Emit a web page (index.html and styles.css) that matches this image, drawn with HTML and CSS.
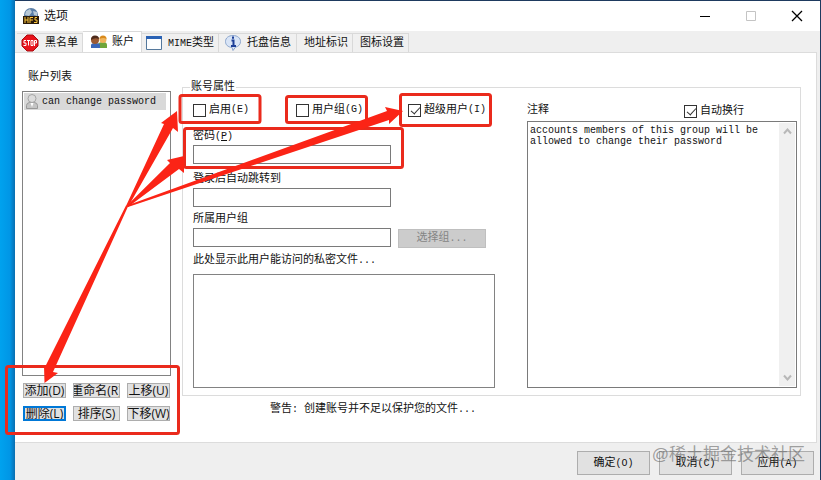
FILE: index.html
```html
<!DOCTYPE html>
<html lang="zh-CN">
<head>
  <meta charset="UTF-8">
  <meta name="viewport" content="width=device-width, initial-scale=1.0">
  <title>选项</title>
  <link rel="stylesheet" href="styles.css">
</head>
<body>
  <div class="window">
    <header class="titlebar">
      <svg class="app-icon" width="18" height="16" viewBox="0 0 18 16">
        <circle cx="9" cy="7" r="7" fill="#5b7fa8"/>
        <path d="M4 3l4-2 2 3-3 4-4-1zM11 3l4 1v4l-3-1z" fill="#b9c9d6"/>
        <rect x="1" y="8" width="16" height="8" fill="#2a1a08"/>
        <path d="M3 9v6M6 9v6M3 12h3M8 15V9.500h3M8 12h3M15 9.500h-2v2.500h2v2.500h-3" fill="none" stroke="#ffc83c"/>
      </svg>
      <h1>选项</h1>
      <div class="window-controls">
        <button type="button" aria-label="最小化"><svg width="12" height="12" viewBox="0 0 12 12"><path d="M1 6.500h10" stroke="#000"/></svg></button>
        <button type="button" aria-label="最大化" disabled><svg width="12" height="12" viewBox="0 0 12 12"><path d="M1.500 1.500h9v9h-9z" fill="none" stroke="#c4c4c4"/></svg></button>
        <button type="button" aria-label="关闭"><svg width="12" height="12" viewBox="0 0 12 12"><path d="M1 1l10 10M11 1L1 11" stroke="#000" stroke-width="1.300"/></svg></button>
      </div>
    </header>

    <nav class="tabs">
      <button type="button" class="tab">
        <svg width="18" height="18" viewBox="0 0 18 18">
          <path d="M6 1h6l5 5v6l-5 5H6l-5-5V6z" fill="#e8141c" stroke="#a80c10"/>
          <path d="M5 6.500H3v2.500h2v2.500H2.500M6 6.500h3M7.500 6.500v5M10 6.500h2v5h-2zM13.500 12V6.500h2V9h-2" fill="none" stroke="#fff"/>
        </svg>
        黑名单
      </button>
      <button type="button" class="tab active">
        <svg width="18" height="14" viewBox="0 0 18 14">
          <path d="M8 13V9q1-2 5-2 4 0 4 3v3z" fill="#6fa53a"/>
          <circle cx="13" cy="4.500" r="3.500" fill="#f0b45c"/>
          <path d="M9.500 4q0-3.500 3.500-3.500T16.500 4q-3-2-7 0z" fill="#d98a1c"/>
          <path d="M1 13v-3q0-2 4.500-2t4.500 2v3z" fill="#3a66b8"/>
          <circle cx="5" cy="5" r="4" fill="#9a5a34"/>
          <path d="M1 5q0-4.500 4-4.500T9 4Q5 2 1 5z" fill="#4e2c1c"/>
        </svg>
        账户
      </button>
      <button type="button" class="tab">
        <svg width="16" height="14" viewBox="0 0 16 14">
          <path d="M.5.5h15v13H.5z" fill="#fdfeff" stroke="#54789c"/>
          <path d="M0 0h16v3H0z" fill="#2a62b4"/>
        </svg>
        <span><span class="latin">MIME</span>类型</span>
      </button>
      <button type="button" class="tab tray">
        <svg width="16" height="16" viewBox="0 0 16 16">
          <path d="M8 .5c4.500 0 7.500 2.500 7.500 6 0 3-2 5-5 5.700L8 15.500l-1-3C3 12 .5 10 .5 6.500.5 3 3.500.5 8 .5z" fill="#d8e4f6" stroke="#8aa4cc"/>
          <path d="M8 1.500v2.200M6.500 5.500H8.500v5.500M6 11h5" fill="none" stroke="#1c3f98" stroke-width="2"/>
        </svg>
        托盘信息
      </button>
      <button type="button" class="tab">地址标识</button>
      <button type="button" class="tab">图标设置</button>
    </nav>

    <main class="pane">
      <section class="accounts">
        <h2>账户列表</h2>
        <ul class="account-list">
          <li class="selected">
            <svg width="12" height="15" viewBox="0 0 12 15">
              <path d="M.5 14.500v-3q0-2.500 3-3h5q3 .5 3 3v3z" fill="#c4c4c4" stroke="#999"/>
              <circle cx="6" cy="4.500" r="4" fill="#dcdcdc" stroke="#a4a4a4"/>
              <path d="M4.500 9L6 13l1.500-4z" fill="#fff"/>
            </svg>
            can change password
          </li>
        </ul>
        <div class="list-actions">
          <button type="button">添加(D)</button>
          <button type="button">重命名(R)</button>
          <button type="button">上移(U)</button>
          <button type="button" class="focused">删除(L)</button>
          <button type="button">排序(S)</button>
          <button type="button">下移(W)</button>
        </div>
      </section>

      <section class="details">
        <fieldset class="properties">
          <legend>账号属性</legend>
          <div class="account-form">
            <div class="flags">
              <label><input type="checkbox">启用<span class="latin">(E)</span></label>
              <label><input type="checkbox">用户组<span class="latin">(G)</span></label>
              <label><input type="checkbox" checked>超级用户<span class="latin">(I)</span></label>
            </div>
            <label class="caption" for="password">密码<span class="latin">(<u>P</u>)</span></label>
            <input class="field" type="password" id="password">
            <label class="caption" for="redirect">登录后自动跳转到</label>
            <input class="field redirect" type="text" id="redirect">
            <label class="caption" for="groups">所属用户组</label>
            <div class="group-row">
              <input class="field" type="text" id="groups">
              <button type="button" disabled>选择组<span class="latin">...</span></button>
            </div>
            <label class="caption" for="files">此处显示此用户能访问的私密文件<span class="latin">...</span></label>
            <textarea class="files" id="files" readonly></textarea>
          </div>

          <div class="notes">
            <div class="notes-head">
              <label for="notes">注释</label>
              <label class="wrap-toggle"><input type="checkbox" checked>自动换行</label>
            </div>
            <div class="notes-box">
              <textarea id="notes">accounts members of this group will be allowed to change their password</textarea>
              <div class="scrollbar">
                <svg width="9" height="7" viewBox="0 0 9 7"><path d="M1 5.500l3.500-4L8 5.500" fill="none" stroke="#b8b8b8" stroke-width="2"/></svg>
                <svg width="9" height="7" viewBox="0 0 9 7"><path d="M1 1.500l3.500 4L8 1.500" fill="none" stroke="#b8b8b8" stroke-width="2"/></svg>
              </div>
            </div>
          </div>
        </fieldset>
        <p class="warning">警告<span class="latin">: </span>创建账号并不足以保护您的文件<span class="latin">...</span></p>
      </section>
    </main>

    <footer class="dialog-actions">
      <button type="button">确定<span class="latin">(O)</span></button>
      <button type="button">取消<span class="latin">(C)</span></button>
      <button type="button">应用<span class="latin">(A)</span></button>
      <span class="watermark">@稀土掘金技术社区</span>
    </footer>
  </div>

  <!-- red callouts drawn over the dialog -->
  <svg class="callouts" width="821" height="480" viewBox="0 0 821 480">
    <g fill="none" stroke="#ea2a1c" stroke-width="3">
      <rect x="180" y="95.500" width="80" height="27" rx="2"/>
      <rect x="286.500" y="96.500" width="80" height="26" rx="2"/>
      <rect x="400.500" y="94.500" width="90" height="31" rx="2"/>
      <rect x="184.500" y="128.500" width="218" height="39" rx="2"/>
      <rect x="6.500" y="366.500" width="172" height="67" rx="2"/>
    </g>
    <g fill="#fb2416">
      <path d="M126 205.500L46 365l-2 1 .5 17L58 373l-5-1L128 206.500z"/>
      <path d="M126 206L164 124l-3-1L177 111l1 21-5-4L128 207z"/>
      <path d="M127 205.500L170 163l-3-3 17-4 0 17-5-4L128 207z"/>
      <path d="M127 205.500L387 111l-2-4 18 4-14 13v-4L128 207z"/>
    </g>
  </svg>
</body>
</html>
```
FILE: styles.css
```css
* {
  box-sizing: border-box;
}

body {
  margin: 0;
  padding: 1px 1px 0 15px;
  min-height: 100vh;
  display: flex;
  background: linear-gradient(to right, #00a2ee 0, #0096e6 10px, #0a6eb0 15px, #1e3a5f 15px);
  font-family: "Liberation Mono", "Noto Sans CJK SC", monospace;
  font-size: 11px;
  line-height: 14px;
  color: #111;
}

button,
input,
textarea {
  font: inherit;
  color: inherit;
  margin: 0;
  border-radius: 0;
}

h1,
h2,
p,
ul {
  margin: 0;
  padding: 0;
  font-size: 11px;
  font-weight: normal;
}

.latin {
  font-size: 10px;
}

.window {
  flex: 1;
  display: flex;
  flex-direction: column;
  background: #efefef;
}

/* title bar */
.titlebar {
  display: flex;
  align-items: center;
  gap: 4px;
  height: 30px;
  padding-left: 7px;
  background: #fff;
}

.titlebar h1 {
  padding-top: 2px;
  font-size: 12px;
}

.window-controls {
  display: flex;
  margin-left: auto;
}

.window-controls button {
  width: 46px;
  height: 28px;
  padding: 0;
  border: none;
  background: none;
}

.window-controls svg {
  display: block;
  margin: auto;
}

/* tabs */
.tabs {
  display: flex;
  align-items: flex-end;
  height: 21px;
  padding-left: 2px;
}

.tab {
  display: flex;
  align-items: center;
  gap: 6px;
  height: 19px;
  padding: 0 4px;
  border: 1px solid #d9d9d9;
  border-left: none;
  border-bottom: none;
  background: #f0f0f0;
}

.tab.tray {
  padding: 0 5px 0 6px;
}

.tab:nth-child(n+5) {
  padding: 0 4px 0 7px;
}

.tab.active {
  height: 22px;
  margin-bottom: -1px;
  padding: 0 7px 2px 7px;
  gap: 4px;
  background: #fff;
}

/* pane */
.pane {
  flex: 1;
  display: flex;
  gap: 11px;
  margin-right: 3px;
  padding: 17px 15px 0 7px;
  border: 1px solid #dcdcdc;
  border-left: none;
  background: #fff;
}

.accounts {
  display: flex;
  flex-direction: column;
  width: 149px;
}

.accounts h2 {
  margin-bottom: 7px;
  padding-left: 6px;
}

.account-list {
  height: 285px;
  padding: 1px;
  border: 1px solid #828282;
  list-style: none;
}

.account-list li {
  display: flex;
  align-items: center;
  gap: 4px;
  width: 142px;
  height: 17px;
  padding-left: 2px;
  background: #d9d9d9;
  font-size: 10px;
}

.list-actions {
  display: grid;
  grid-template-columns: 43px 47px 43px;
  gap: 8px 7px;
  margin: 7px 0 0 1px;
}

.list-actions button {
  display: flex;
  justify-content: center;
  align-items: center;
  height: 15px;
  padding: 0;
  border: 1px solid #adadad;
  background: #e1e1e1;
  font-family: "Open Sans", "Noto Sans CJK SC", sans-serif;
  font-size: 12px;
  line-height: 13px;
  white-space: nowrap;
  overflow: hidden;
}

.list-actions .focused {
  border: 2px solid #0078d7;
}

/* account properties */
.details {
  flex: 1;
  padding-top: 10px;
}

.properties {
  display: flex;
  gap: 32px;
  margin: 0;
  padding: 9px 3px 7px 10px;
  border: 1px solid #dcdcdc;
}

.properties legend {
  margin-left: -3px;
  padding: 0 1px;
}

.account-form {
  display: flex;
  flex-direction: column;
  align-items: flex-start;
  width: 302px;
}

.flags {
  display: grid;
  grid-template-columns: 103px 112px auto;
  margin-bottom: 12px;
}

.flags label,
.wrap-toggle {
  display: flex;
  align-items: center;
}

input[type="checkbox"] {
  appearance: none;
  width: 13px;
  height: 13px;
  margin-right: 3px;
  border: 1px solid #333;
  background: #fff;
}

input[type="checkbox"]:checked::before {
  content: "";
  display: block;
  width: 4px;
  height: 8px;
  margin: 0 0 0 4px;
  border: solid #333;
  border-width: 0 1px 1px 0;
  transform: rotate(42deg);
}

.caption {
  height: 14px;
  margin-bottom: 2px;
}

.field {
  width: 198px;
  height: 19px;
  margin-bottom: 8px;
  padding: 0 3px;
  border: 1px solid #7a7a7a;
  background: #fff;
}

.field.redirect {
  margin-bottom: 5px;
}

.group-row {
  display: flex;
  gap: 7px;
  margin-bottom: 5px;
}

.group-row .field {
  margin: 0;
}

.group-row button {
  width: 88px;
  height: 19px;
  margin-top: 1px;
  padding: 0;
  border: 1px solid #bfbfbf;
  background: #ccc;
  color: #858585;
}

.files {
  width: 100%;
  height: 114px;
  margin-top: 5px;
  border: 1px solid #828282;
  resize: none;
}

.notes {
  flex: 1;
  display: flex;
  flex-direction: column;
}

.notes-head {
  display: flex;
  justify-content: space-between;
  margin-bottom: 3px;
  padding-right: 53px;
}

.wrap-toggle {
  padding-top: 1px;
}

.notes-box {
  flex: 1;
  display: flex;
  border: 1px solid #7a7a7a;
}

.notes-box textarea {
  flex: 1;
  min-width: 0;
  padding: 3px 2px;
  border: none;
  font-size: 10px;
  line-height: 11px;
  resize: none;
  overflow: hidden;
}

.scrollbar {
  display: flex;
  flex-direction: column;
  justify-content: space-between;
  align-items: center;
  width: 16px;
  margin: 1px;
  padding: 5px 0;
  background: #f0f0f0;
}

.warning {
  margin-top: 6px;
  padding-left: 88px;
}

/* footer */
.dialog-actions {
  position: relative;
  display: flex;
  justify-content: flex-end;
  gap: 9px;
  height: 37px;
  padding: 8px 6px 5px 0;
}

.dialog-actions button {
  width: 73px;
  height: 24px;
  padding: 0;
  border: 1px solid #adadad;
  background: #e1e1e1;
}

.watermark {
  position: absolute;
  right: 15px;
  top: 0;
  font-family: "Liberation Sans", "Noto Sans CJK SC", sans-serif;
  font-size: 17px;
  line-height: 24px;
  color: rgba(110, 110, 110, 0.65);
  pointer-events: none;
}

.callouts {
  position: absolute;
  left: 0;
  top: 0;
  pointer-events: none;
}
```
